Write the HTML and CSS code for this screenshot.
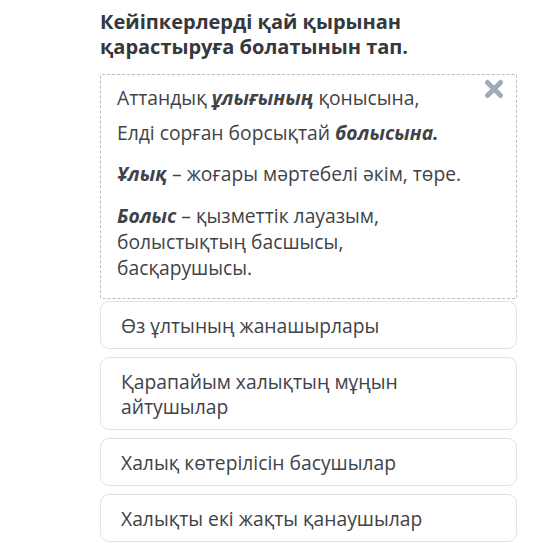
FILE: index.html
```html
<!DOCTYPE html>
<html>
<head>
<meta charset="utf-8">
<link rel="stylesheet" href="styles.css">
</head>
<body>
<div class="page">
  <h1 class="title">Кейіпкерлерді қай қырынан<br>қарастыруға болатынын тап.</h1>
  <div class="passage">
    <svg class="close" viewBox="0 0 20 20" width="22" height="22"><path d="M4 4 L16 16 M16 4 L4 16" stroke="#9eabb9" stroke-width="4.5" stroke-linecap="round"/></svg>
    <p class="p1">Аттандық <b><i>ұлығының</i></b> қонысына,</p>
    <p class="p2">Елді сорған борсықтай <b><i>болысына.</i></b></p>
    <p class="p3"><b><i>Ұлық</i></b> – жоғары мәртебелі әкім, төре.</p>
    <p class="p4"><b><i>Болыс</i></b> – қызметтік лауазым,<br>болыстықтың басшысы,<br>басқарушысы.</p>
  </div>
  <div class="options">
    <div class="opt">Өз ұлтының жанашырлары</div>
    <div class="opt">Қарапайым халықтың мұңын<br>айтушылар</div>
    <div class="opt">Халық көтерілісін басушылар</div>
    <div class="opt">Халықты екі жақты қанаушылар</div>
  </div>
</div>
</body>
</html>
```
FILE: styles.css
```css
* { box-sizing: border-box; }
html, body { margin: 0; padding: 0; background: #fff; }
body { font-family: "Open Sans", "Noto Sans", sans-serif; color: #3f4347; }
.page { width: 417px; margin-left: 100px; padding-top: 9px; }
.title { font-size: 20px; font-weight: 700; line-height: 25px; margin: 0 0 15px 0; color: #35383c; }
.passage { position: relative; border: 1px dashed #b9bcc0; border-radius: 2px; padding: 10px 16px 17px 16px; }
.close { position: absolute; right: 11px; top: 3px; }
.passage p { margin: 0; font-size: 19.3px; line-height: 26px; }
.p2 { margin-top: 9px !important; }
.p3 { margin-top: 15px !important; }
.p4 { margin-top: 16px !important; }
.options { display: flex; flex-direction: column; gap: 8px; margin-top: 2px; }
.opt { border: 1px solid #e1e2e4; border-radius: 9px; padding: 10.5px 20px; font-size: 19.3px; line-height: 25px; }
```
